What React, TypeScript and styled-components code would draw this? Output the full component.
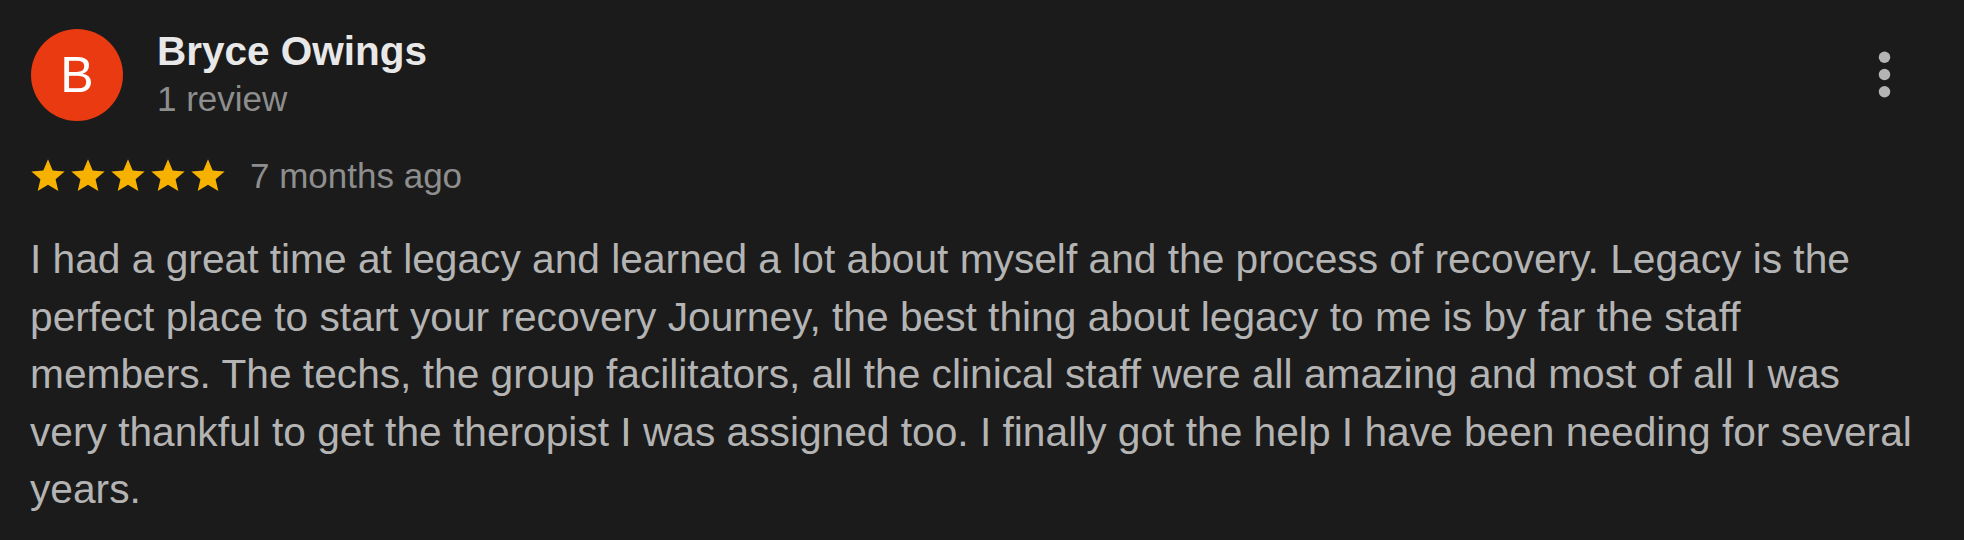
import React from 'react';
import styled, { createGlobalStyle } from 'styled-components';

const GlobalStyle = createGlobalStyle`
  html, body {
    margin: 0;
    padding: 0;
    background: #1b1b1b;
  }
  body {
    font-family: "Liberation Sans", Arial, Helvetica, sans-serif;
  }
`;

const Card = styled.article`
  padding: 27px 40px 0 30px;
  background: #1b1b1b;
`;

const Header = styled.header`
  display: flex;
  align-items: flex-start;
`;

const Avatar = styled.div<{ $bg: string }>`
  flex: none;
  width: 92px;
  height: 92px;
  margin: 2px 0 0 1px;
  border-radius: 50%;
  background: ${(p) => p.$bg};
  color: #ffffff;
  display: flex;
  align-items: center;
  justify-content: center;
  font-size: 50px;
  line-height: 1;
`;

const Who = styled.div`
  flex: 1;
  margin-left: 34px;
`;

const Name = styled.div`
  font-size: 40.5px;
  line-height: 48px;
  font-weight: 700;
  color: #e8e8e8;
`;

const Sub = styled.div`
  margin-top: 3px;
  font-size: 35px;
  line-height: 42px;
  color: #8e8e8e;
`;

const MenuButton = styled.button`
  flex: none;
  margin: 13px 5px 0 0;
  padding: 0;
  border: 0;
  background: transparent;
  line-height: 0;
  cursor: pointer;
`;

const Meta = styled.div`
  display: flex;
  align-items: center;
  margin-top: 34px;
`;

const Stars = styled.div`
  display: flex;
  margin-left: -2px;
`;

const Ago = styled.span`
  margin-left: 22px;
  font-size: 35px;
  line-height: 42px;
  color: #8e8e8e;
`;

const Body = styled.p`
  margin: 34px 0 0;
  font-size: 40.7px;
  line-height: 57.5px;
  color: #b4b4b4;
`;

function Star() {
  return (
    <svg width="40" height="40" viewBox="0 0 24 24">
      <path
        fill="#f7b100"
        d="M12 17.27L18.18 21l-1.64-7.03L22 9.24l-7.19-.61L12 2 9.19 8.63 2 9.24l5.46 4.73L5.82 21z"
      />
    </svg>
  );
}

function MoreVert() {
  return (
    <svg width="69" height="69" viewBox="0 0 24 24">
      <g fill="#b4b4b4">
        <circle cx="12" cy="6" r="2" />
        <circle cx="12" cy="12" r="2" />
        <circle cx="12" cy="18" r="2" />
      </g>
    </svg>
  );
}

const review =
  'I had a great time at legacy and learned a lot about myself and the process of recovery. Legacy is the perfect place to start your recovery Journey, the best thing about legacy to me is by far the staff members. The techs, the group facilitators, all the clinical staff were all amazing and most of all I was very thankful to get the theropist I was assigned too. I finally got the help I have been needing for several years.';

export default function App() {
  return (
    <>
      <GlobalStyle />
      <Card>
        <Header>
          <Avatar $bg="#e93a12">B</Avatar>
          <Who>
            <Name>Bryce Owings</Name>
            <Sub>1 review</Sub>
          </Who>
          <MenuButton aria-label="More options">
            <MoreVert />
          </MenuButton>
        </Header>
        <Meta>
          <Stars>
            {[0, 1, 2, 3, 4].map((i) => (
              <Star key={i} />
            ))}
          </Stars>
          <Ago>7 months ago</Ago>
        </Meta>
        <Body>{review}</Body>
      </Card>
    </>
  );
}
